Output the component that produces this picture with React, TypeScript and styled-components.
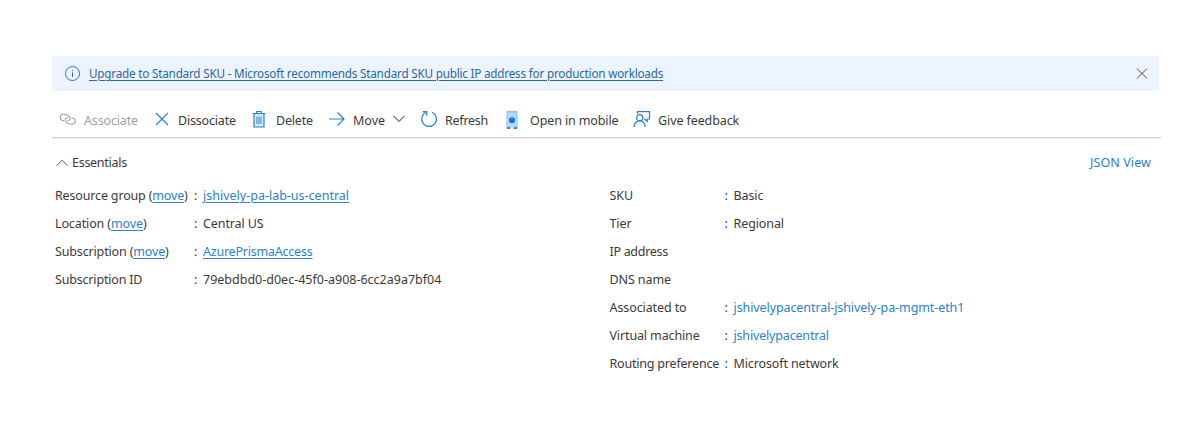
import React from 'react';
import styled, { createGlobalStyle } from 'styled-components';

const GlobalStyle = createGlobalStyle`
  * { box-sizing: border-box; }
  body {
    margin: 0;
    background: #fff;
    color: #3b3a39;
    font-family: 'Noto Sans', 'Open Sans', sans-serif;
    font-size: 12.5px;
    line-height: 18px;
  }
`;

const Page = styled.main`
  width: 1109px;
  margin: 56px 0 0 52px;
`;

const Banner = styled.div`
  display: flex;
  align-items: center;
  width: 1107px;
  height: 35px;
  padding: 0 11px 0 13px;
  background: #edf4ff;
`;

const BannerLink = styled.a`
  margin-left: 8px;
  margin-right: auto;
  padding-bottom: 1px;
  color: #2769a3;
  font-size: 11.7px;
  letter-spacing: -0.2px;
  text-decoration: underline;
  text-decoration-thickness: 1px;
  text-underline-offset: 2px;
  white-space: nowrap;
`;

const Toolbar = styled.div`
  display: flex;
  align-items: center;
  height: 47px;
  padding: 10px 0 0 6px;
  border-bottom: 1px solid #d0d0d0;
  box-shadow: 0 1px 0 #f1f1f1, 0 5px 0 #fff, 0 6px 0 #fafafa;
`;

const Command = styled.div<{ $width: number; $disabled?: boolean }>`
  display: flex;
  align-items: center;
  flex: none;
  width: ${(p) => p.$width}px;
  color: ${(p) => (p.$disabled ? '#a19f9d' : '#3b3a39')};
`;

const Label = styled.span<{ $track?: number }>`
  letter-spacing: ${(p) => p.$track ?? 0}px;
  white-space: nowrap;
`;

const CommandLabel = styled(Label)`
  padding-top: 3px;
`;

const IconSlot = styled.span<{ $width: number }>`
  display: flex;
  flex: none;
  width: ${(p) => p.$width}px;
`;

const Icon = styled.svg`
  display: block;
  flex: none;
  fill: none;
`;

const EssentialsBar = styled.div`
  display: flex;
  align-items: center;
  justify-content: space-between;
  height: 49px;
  padding: 0 10px 0 4px;
`;

const Heading = styled.div`
  display: flex;
  align-items: center;
  gap: 4px;
`;

const Link = styled.a<{ $underline?: boolean }>`
  color: #2a7fd0;
  text-decoration: ${(p) => (p.$underline ? 'underline' : 'none')};
  text-decoration-thickness: 1px;
  text-underline-offset: 2px;
`;

const Columns = styled.div`
  display: grid;
  grid-template-columns: 554.5px 1fr;
  padding-left: 3px;
  margin-top: -5px;
`;

const Row = styled.div<{ $label: number }>`
  display: grid;
  grid-template-columns: ${(p) => p.$label}px 9px 1fr;
  align-items: center;
  height: 28px;
  white-space: nowrap;
`;

type Field = { name: string; track?: number; move?: boolean; value?: string; valueTrack?: number; link?: 'plain' | 'underline' };

const leftFields: Field[] = [
  { name: 'Resource group', track: -0.16, move: true, value: 'jshively-pa-lab-us-central', link: 'underline' },
  { name: 'Location', track: -0.12, move: true, value: 'Central US', valueTrack: -0.1 },
  { name: 'Subscription', track: -0.15, move: true, value: 'AzurePrismaAccess', valueTrack: -0.22, link: 'underline' },
  { name: 'Subscription ID', track: -0.18, value: '79ebdbd0-d0ec-45f0-a908-6cc2a9a7bf04' },
];

const rightFields: Field[] = [
  { name: 'SKU', value: 'Basic', valueTrack: -0.1 },
  { name: 'Tier', track: -0.1, value: 'Regional', valueTrack: -0.1 },
  { name: 'IP address', track: -0.3 },
  { name: 'DNS name', track: -0.1 },
  { name: 'Associated to', track: -0.1, value: 'jshivelypacentral-jshively-pa-mgmt-eth1', valueTrack: -0.09, link: 'plain' },
  { name: 'Virtual machine', track: -0.13, value: 'jshivelypacentral', valueTrack: -0.17, link: 'plain' },
  { name: 'Routing preference', track: -0.2, value: 'Microsoft network', valueTrack: -0.12 },
];

function FieldList({ fields, label }: { fields: Field[]; label: number }) {
  return (
    <div>
      {fields.map((f) => (
        <Row key={f.name} $label={label}>
          <div>
            <Label $track={f.track}>
              {f.name}
              {f.move && <> (<Link $underline>move</Link>)</>}
            </Label>
          </div>
          <span>{f.value ? ':' : ''}</span>
          <div>
            <Label $track={f.valueTrack}>
              {f.link ? <Link $underline={f.link === 'underline'}>{f.value}</Link> : f.value}
            </Label>
          </div>
        </Row>
      ))}
    </div>
  );
}

const InfoIcon = () => (
  <Icon width="16" height="16" viewBox="0 0 16 16" stroke="#2b6cd8">
    <circle cx="7.5" cy="7.5" r="7" />
    <path d="M7.5 6.3v4.700M7.5 4v1.200" />
  </Icon>
);

const CloseIcon = () => (
  <Icon width="12" height="12" viewBox="0 0 12 12" stroke="#505050">
    <path d="M1 .5l10 10M11 .5L1 10.500" />
  </Icon>
);

const LinkIcon = () => (
  <Icon width="18" height="14" viewBox="0 0 18 14" stroke="#a19f9d" strokeWidth="1.1">
    <path d="M6 8.900C3.800 8.700 2.300 7.200 2.300 5.200 2.300 3.300 3.800 2.200 5.700 2.200c2.300 0 5.800 1.500 6.200 3.700.3 1.700-.9 2.900-2.500 2.900" />
    <path d="M13.400 5.700c2.400.2 3.900 1.500 3.900 3.300 0 2-1.600 3.200-3.500 3.200-2.400 0-6-1.300-6.500-3.500-.4-1.700.8-3 2.500-3" />
  </Icon>
);

const CrossIcon = () => (
  <Icon width="14" height="14" viewBox="0 0 14 14" stroke="#2a80d4" strokeWidth="1.2">
    <path d="M1 1l12 12M13 1L1 13" />
  </Icon>
);

const TrashIcon = () => (
  <Icon width="14" height="18" viewBox="0 0 14 18" stroke="#2a80d4" strokeWidth="1.2">
    <path d="M2 4v13h10V4" fill="#d8ebfb" />
    <path d="M.5 3.500h13M4.700 3.500v-2h4.600v2" />
    <path d="M5 6.500v7.500M7 6.500v7.500M9 6.500v7.500" strokeWidth="1" />
  </Icon>
);

const ArrowIcon = () => (
  <Icon width="18" height="16" viewBox="0 0 18 16" stroke="#2a80d4" strokeWidth="1.2">
    <path d="M1 8h15M9.500 1.500L16 8l-6.500 6.500" />
  </Icon>
);

const DownIcon = () => (
  <Icon width="12" height="8" viewBox="0 0 12 8" stroke="#777" strokeWidth="1.2">
    <path d="M.5 1L6 6.500 11.500 1" />
  </Icon>
);

const UpIcon = () => (
  <Icon width="12" height="8" viewBox="0 0 12 8" stroke="#555">
    <path d="M.5 6.700L6 1.200l5.500 5.500" />
  </Icon>
);

const RefreshIcon = () => (
  <Icon width="18" height="18" viewBox="0 0 18 18" stroke="#2a80d4" strokeWidth="1.2">
    <path d="M12 2.200A7.400 7.400 0 1 1 6.200 2.200" />
    <path d="M2.800 1.700H6.800V5.700" />
  </Icon>
);

const MobileIcon = () => (
  <Icon width="12" height="20" viewBox="0 0 12 20">
    <rect x=".5" y="2" width="11" height="18" rx=".7" fill="#8cc2f3" />
    <rect x="1.500" y="3.500" width="9" height="14.500" fill="#b4d9fa" />
    <path d="M6 8l3 1.600v3.300L6 14.600l-3-1.700V9.600z" fill="#1873cf" />
    <path d="M3 9.600L6 8l3 1.600-3 1.700z" fill="#3189dd" />
    <path d="M1 18h10v2H1z" fill="#3388dc" />
    <path d="M4 18h4v2h-4z" fill="#c4e1fa" />
  </Icon>
);

const FeedbackIcon = () => (
  <Icon width="18" height="18" viewBox="0 0 18 18" stroke="#2a80d4" strokeWidth="1.2">
    <path d="M4.500 4V1.700h12V9h-2.200v2.500L11.300 8.800" />
    <circle cx="6.700" cy="7.700" r="3.100" />
    <path d="M1 17c.2-3.600 2.500-6.100 5.700-6.100s5.200 2.500 5.400 6.100" />
  </Icon>
);

const commands = [
  { text: 'Associate', icon: LinkIcon, slot: 26, width: 97, disabled: true, track: -0.15 },
  { text: 'Dissociate', icon: CrossIcon, slot: 23, width: 97, track: -0.18 },
  { text: 'Delete', icon: TrashIcon, slot: 24, width: 76, track: -0.2 },
  { text: 'Move', icon: ArrowIcon, slot: 25, width: 92, menu: true, track: 0 },
  { text: 'Refresh', icon: RefreshIcon, slot: 25, width: 86, track: -0.25 },
  { text: 'Open in mobile', icon: MobileIcon, slot: 24, width: 127, track: -0.12 },
  { text: 'Give feedback', icon: FeedbackIcon, slot: 25, width: 110, track: -0.1 },
];

const MenuArrow = styled.span`
  margin-left: 8px;
`;

export default function App() {
  return (
    <>
      <GlobalStyle />
      <Page>
        <Banner>
          <InfoIcon />
          <BannerLink>Upgrade to Standard SKU - Microsoft recommends Standard SKU public IP address for production workloads</BannerLink>
          <CloseIcon />
        </Banner>
        <Toolbar>
          {commands.map(({ text, icon: Glyph, slot, width, disabled, menu, track }) => (
            <Command key={text} $width={width} $disabled={disabled}>
              <IconSlot $width={slot}><Glyph /></IconSlot>
              <CommandLabel $track={track}>{text}</CommandLabel>
              {menu && <MenuArrow><DownIcon /></MenuArrow>}
            </Command>
          ))}
        </Toolbar>
        <EssentialsBar>
          <Heading><UpIcon /><Label $track={-0.28}>Essentials</Label></Heading>
          <Label $track={0.1}><Link>JSON View</Link></Label>
        </EssentialsBar>
        <Columns>
          <FieldList fields={leftFields} label={139} />
          <FieldList fields={rightFields} label={115} />
        </Columns>
      </Page>
    </>
  );
}
